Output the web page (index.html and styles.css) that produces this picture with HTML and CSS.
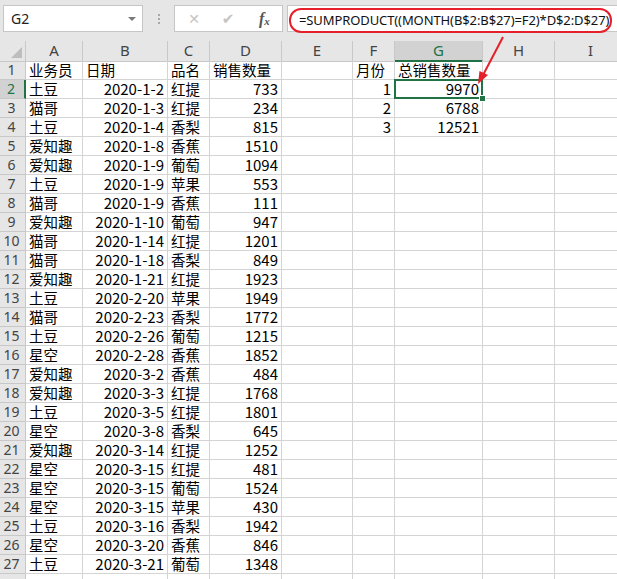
FILE: index.html
```html
<!DOCTYPE html>
<html lang="zh-CN">
<head>
<meta charset="utf-8">
<title>SUMPRODUCT</title>
<link rel="stylesheet" href="styles.css">
</head>
<body>
<div class="toolbar">
  <div class="namebox"><span class="ref">G2</span><span class="caret"></span></div>
  <div class="grip"><i></i><i></i><i></i></div>
  <div class="btns">
    <span class="btn x">&#x2715;</span>
    <span class="btn ok">&#x2714;</span>
    <span class="btn fx">f<sub>x</sub></span>
  </div>
  <div class="formula"><span class="mark">=SUMPRODUCT((MONTH(B$2:B$27)=F2)*D$2:D$27)</span></div>
</div>

<div class="sheet">
  <div class="row hdr"><div class="rh corner"><span class="tri"></span></div><div class="ch">A</div><div class="ch">B</div><div class="ch">C</div><div class="ch">D</div><div class="ch">E</div><div class="ch">F</div><div class="ch sel">G</div><div class="ch">H</div><div class="ch">I</div></div>
  <div class="row"><div class="rh">1</div><div class="c">业务员</div><div class="c">日期</div><div class="c">品名</div><div class="c">销售数量</div><div class="c"></div><div class="c">月份</div><div class="c">总销售数量</div><div class="c"></div><div class="c"></div></div>
  <div class="row"><div class="rh selrow">2</div><div class="c">土豆</div><div class="c n">2020-1-2</div><div class="c">红提</div><div class="c n">733</div><div class="c"></div><div class="c n">1</div><div class="c n active">9970</div><div class="c"></div><div class="c"></div></div>
  <div class="row"><div class="rh">3</div><div class="c">猫哥</div><div class="c n">2020-1-3</div><div class="c">红提</div><div class="c n">234</div><div class="c"></div><div class="c n">2</div><div class="c n">6788</div><div class="c"></div><div class="c"></div></div>
  <div class="row"><div class="rh">4</div><div class="c">土豆</div><div class="c n">2020-1-4</div><div class="c">香梨</div><div class="c n">815</div><div class="c"></div><div class="c n">3</div><div class="c n">12521</div><div class="c"></div><div class="c"></div></div>
  <div class="row"><div class="rh">5</div><div class="c">爱知趣</div><div class="c n">2020-1-8</div><div class="c">香蕉</div><div class="c n">1510</div><div class="c"></div><div class="c"></div><div class="c"></div><div class="c"></div><div class="c"></div></div>
  <div class="row"><div class="rh">6</div><div class="c">爱知趣</div><div class="c n">2020-1-9</div><div class="c">葡萄</div><div class="c n">1094</div><div class="c"></div><div class="c"></div><div class="c"></div><div class="c"></div><div class="c"></div></div>
  <div class="row"><div class="rh">7</div><div class="c">土豆</div><div class="c n">2020-1-9</div><div class="c">苹果</div><div class="c n">553</div><div class="c"></div><div class="c"></div><div class="c"></div><div class="c"></div><div class="c"></div></div>
  <div class="row"><div class="rh">8</div><div class="c">猫哥</div><div class="c n">2020-1-9</div><div class="c">香蕉</div><div class="c n">111</div><div class="c"></div><div class="c"></div><div class="c"></div><div class="c"></div><div class="c"></div></div>
  <div class="row"><div class="rh">9</div><div class="c">爱知趣</div><div class="c n">2020-1-10</div><div class="c">葡萄</div><div class="c n">947</div><div class="c"></div><div class="c"></div><div class="c"></div><div class="c"></div><div class="c"></div></div>
  <div class="row"><div class="rh">10</div><div class="c">猫哥</div><div class="c n">2020-1-14</div><div class="c">红提</div><div class="c n">1201</div><div class="c"></div><div class="c"></div><div class="c"></div><div class="c"></div><div class="c"></div></div>
  <div class="row"><div class="rh">11</div><div class="c">猫哥</div><div class="c n">2020-1-18</div><div class="c">香梨</div><div class="c n">849</div><div class="c"></div><div class="c"></div><div class="c"></div><div class="c"></div><div class="c"></div></div>
  <div class="row"><div class="rh">12</div><div class="c">爱知趣</div><div class="c n">2020-1-21</div><div class="c">红提</div><div class="c n">1923</div><div class="c"></div><div class="c"></div><div class="c"></div><div class="c"></div><div class="c"></div></div>
  <div class="row"><div class="rh">13</div><div class="c">土豆</div><div class="c n">2020-2-20</div><div class="c">苹果</div><div class="c n">1949</div><div class="c"></div><div class="c"></div><div class="c"></div><div class="c"></div><div class="c"></div></div>
  <div class="row"><div class="rh">14</div><div class="c">猫哥</div><div class="c n">2020-2-23</div><div class="c">香梨</div><div class="c n">1772</div><div class="c"></div><div class="c"></div><div class="c"></div><div class="c"></div><div class="c"></div></div>
  <div class="row"><div class="rh">15</div><div class="c">土豆</div><div class="c n">2020-2-26</div><div class="c">葡萄</div><div class="c n">1215</div><div class="c"></div><div class="c"></div><div class="c"></div><div class="c"></div><div class="c"></div></div>
  <div class="row"><div class="rh">16</div><div class="c">星空</div><div class="c n">2020-2-28</div><div class="c">香蕉</div><div class="c n">1852</div><div class="c"></div><div class="c"></div><div class="c"></div><div class="c"></div><div class="c"></div></div>
  <div class="row"><div class="rh">17</div><div class="c">爱知趣</div><div class="c n">2020-3-2</div><div class="c">香蕉</div><div class="c n">484</div><div class="c"></div><div class="c"></div><div class="c"></div><div class="c"></div><div class="c"></div></div>
  <div class="row"><div class="rh">18</div><div class="c">爱知趣</div><div class="c n">2020-3-3</div><div class="c">红提</div><div class="c n">1768</div><div class="c"></div><div class="c"></div><div class="c"></div><div class="c"></div><div class="c"></div></div>
  <div class="row"><div class="rh">19</div><div class="c">土豆</div><div class="c n">2020-3-5</div><div class="c">红提</div><div class="c n">1801</div><div class="c"></div><div class="c"></div><div class="c"></div><div class="c"></div><div class="c"></div></div>
  <div class="row"><div class="rh">20</div><div class="c">星空</div><div class="c n">2020-3-8</div><div class="c">香梨</div><div class="c n">645</div><div class="c"></div><div class="c"></div><div class="c"></div><div class="c"></div><div class="c"></div></div>
  <div class="row"><div class="rh">21</div><div class="c">爱知趣</div><div class="c n">2020-3-14</div><div class="c">红提</div><div class="c n">1252</div><div class="c"></div><div class="c"></div><div class="c"></div><div class="c"></div><div class="c"></div></div>
  <div class="row"><div class="rh">22</div><div class="c">星空</div><div class="c n">2020-3-15</div><div class="c">红提</div><div class="c n">481</div><div class="c"></div><div class="c"></div><div class="c"></div><div class="c"></div><div class="c"></div></div>
  <div class="row"><div class="rh">23</div><div class="c">星空</div><div class="c n">2020-3-15</div><div class="c">葡萄</div><div class="c n">1524</div><div class="c"></div><div class="c"></div><div class="c"></div><div class="c"></div><div class="c"></div></div>
  <div class="row"><div class="rh">24</div><div class="c">星空</div><div class="c n">2020-3-15</div><div class="c">苹果</div><div class="c n">430</div><div class="c"></div><div class="c"></div><div class="c"></div><div class="c"></div><div class="c"></div></div>
  <div class="row"><div class="rh">25</div><div class="c">土豆</div><div class="c n">2020-3-16</div><div class="c">香梨</div><div class="c n">1942</div><div class="c"></div><div class="c"></div><div class="c"></div><div class="c"></div><div class="c"></div></div>
  <div class="row"><div class="rh">26</div><div class="c">星空</div><div class="c n">2020-3-20</div><div class="c">香蕉</div><div class="c n">846</div><div class="c"></div><div class="c"></div><div class="c"></div><div class="c"></div><div class="c"></div></div>
  <div class="row"><div class="rh">27</div><div class="c">土豆</div><div class="c n">2020-3-21</div><div class="c">葡萄</div><div class="c n">1348</div><div class="c"></div><div class="c"></div><div class="c"></div><div class="c"></div><div class="c"></div></div>
  <div class="row"><div class="rh"></div><div class="c"></div><div class="c"></div><div class="c"></div><div class="c"></div><div class="c"></div><div class="c"></div><div class="c"></div><div class="c"></div><div class="c"></div></div>
</div>

<svg class="arrow" width="617" height="579" viewBox="0 0 617 579">
  <line x1="503" y1="37" x2="482" y2="77" stroke="#e5202a" stroke-width="2"/>
  <polygon points="478,84 488,75 479.5,71" fill="#e5202a"/>
</svg>
</body>
</html>
```

FILE: styles.css
```css
html, body {
  margin: 0;
  padding: 0;
}
body {
  width: 617px;
  height: 579px;
  overflow: hidden;
  position: relative;
  background: #ffffff;
  font-family: "Noto Sans CJK SC", "Noto Sans", sans-serif;
  color: #000;
}

/* ---------- formula toolbar ---------- */
.toolbar {
  display: flex;
  align-items: flex-start;
  height: 41px;
  box-sizing: border-box;
  padding-top: 5px;
  background: #e6e6e6;
}
.namebox {
  margin-left: 3px;
  width: 140px;
  height: 27px;
  box-sizing: border-box;
  background: #fff;
  border: 1px solid #c6c6c6;
  display: flex;
  align-items: center;
  justify-content: space-between;
  padding: 0 6px 0 7px;
}
.ref {
  font-family: "Noto Sans", "Liberation Sans", sans-serif;
  font-size: 14px;
  color: #222;
}
.caret {
  width: 0;
  height: 0;
  border-left: 4px solid transparent;
  border-right: 4px solid transparent;
  border-top: 4px solid #7a7a7a;
}
.grip {
  width: 31px;
  height: 27px;
  display: flex;
  flex-direction: column;
  align-items: center;
  justify-content: center;
  gap: 2px;
}
.grip i {
  width: 2px;
  height: 2px;
  background: #a8a8a8;
}
.btns {
  width: 109px;
  height: 27px;
  box-sizing: border-box;
  background: #fff;
  border: 1px solid #c6c6c6;
  display: flex;
  align-items: center;
  padding-left: 12px;
}
.btn {
  display: inline-block;
  text-align: center;
  font-family: "DejaVu Sans", sans-serif;
  color: #c4c4c4;
}
.btn.x { width: 14px; font-size: 14px; }
.btn.ok { width: 16px; margin-left: 19px; font-size: 15px; }
.btn.fx {
  margin-left: 23px;
  font-family: "Liberation Serif", serif;
  font-style: italic;
  font-size: 16px;
  color: #555;
  font-weight: bold;
}
.btn.fx sub {
  font-size: 11px;
  vertical-align: -1px;
}
.formula {
  flex: 1;
  margin-left: 4px;
  height: 27px;
  box-sizing: border-box;
  background: #fff;
  border: 1px solid #c6c6c6;
  border-right: none;
  padding: 0 0 0 1px;
}
.mark {
  display: inline-flex;
  align-items: center;
  height: 25px;
  width: 323px;
  box-sizing: border-box;
  border: 2px solid #e5202a;
  border-radius: 12px;
  padding-left: 8px;
  font-family: "Noto Sans", "Liberation Sans", sans-serif;
  font-size: 13px;
  color: #111;
  white-space: nowrap;
  letter-spacing: -0.1px;
}

/* ---------- sheet grid ---------- */
.sheet {
  width: 627px;
}
.row {
  display: grid;
  grid-template-columns: 26px 57px 85px 42px 72px 71px 42px 88px 72px 72px;
  height: 19px;
}
.row.hdr {
  height: 20px;
}
.rh, .ch {
  box-sizing: border-box;
  background: #e6e6e6;
  color: #444;
  font-family: "Noto Sans", "Liberation Sans", sans-serif;
  text-align: center;
  border-right: 1px solid #c8c8c8;
  border-bottom: 1px solid #c8c8c8;
}
.ch {
  font-size: 15px;
  line-height: 19px;
}
.rh {
  font-size: 14px;
  line-height: 18px;
  padding-right: 2px;
}
.corner {
  position: relative;
}
.tri {
  position: absolute;
  right: 3px;
  bottom: 3px;
  width: 0;
  height: 0;
  border-left: 11px solid transparent;
  border-bottom: 11px solid #bdbdbd;
}
.ch.sel {
  background: #d2d2d2;
  color: #217346;
  border-bottom: 2px solid #217346;
}
.rh.selrow {
  background: #d2d2d2;
  color: #217346;
  border-right: 2px solid #217346;
}
.c {
  box-sizing: border-box;
  border-right: 1px solid #d4d4d4;
  border-bottom: 1px solid #d4d4d4;
  font-size: 14.5px;
  line-height: 18px;
  padding: 0 3px;
  white-space: nowrap;
  overflow: visible;
}
.c.n {
  text-align: right;
  padding-right: 3px;
  font-size: 15px;
}
.c.active {
  position: relative;
}
.c.active::after {
  content: "";
  position: absolute;
  left: -1px;
  top: -1px;
  right: -1px;
  bottom: -1px;
  border: 2px solid #217346;
}
.c.active::before {
  content: "";
  position: absolute;
  right: -4px;
  bottom: -4px;
  width: 5px;
  height: 5px;
  background: #217346;
  border: 1px solid #fff;
  z-index: 2;
}

.arrow {
  position: absolute;
  left: 0;
  top: 0;
  pointer-events: none;
}
```
